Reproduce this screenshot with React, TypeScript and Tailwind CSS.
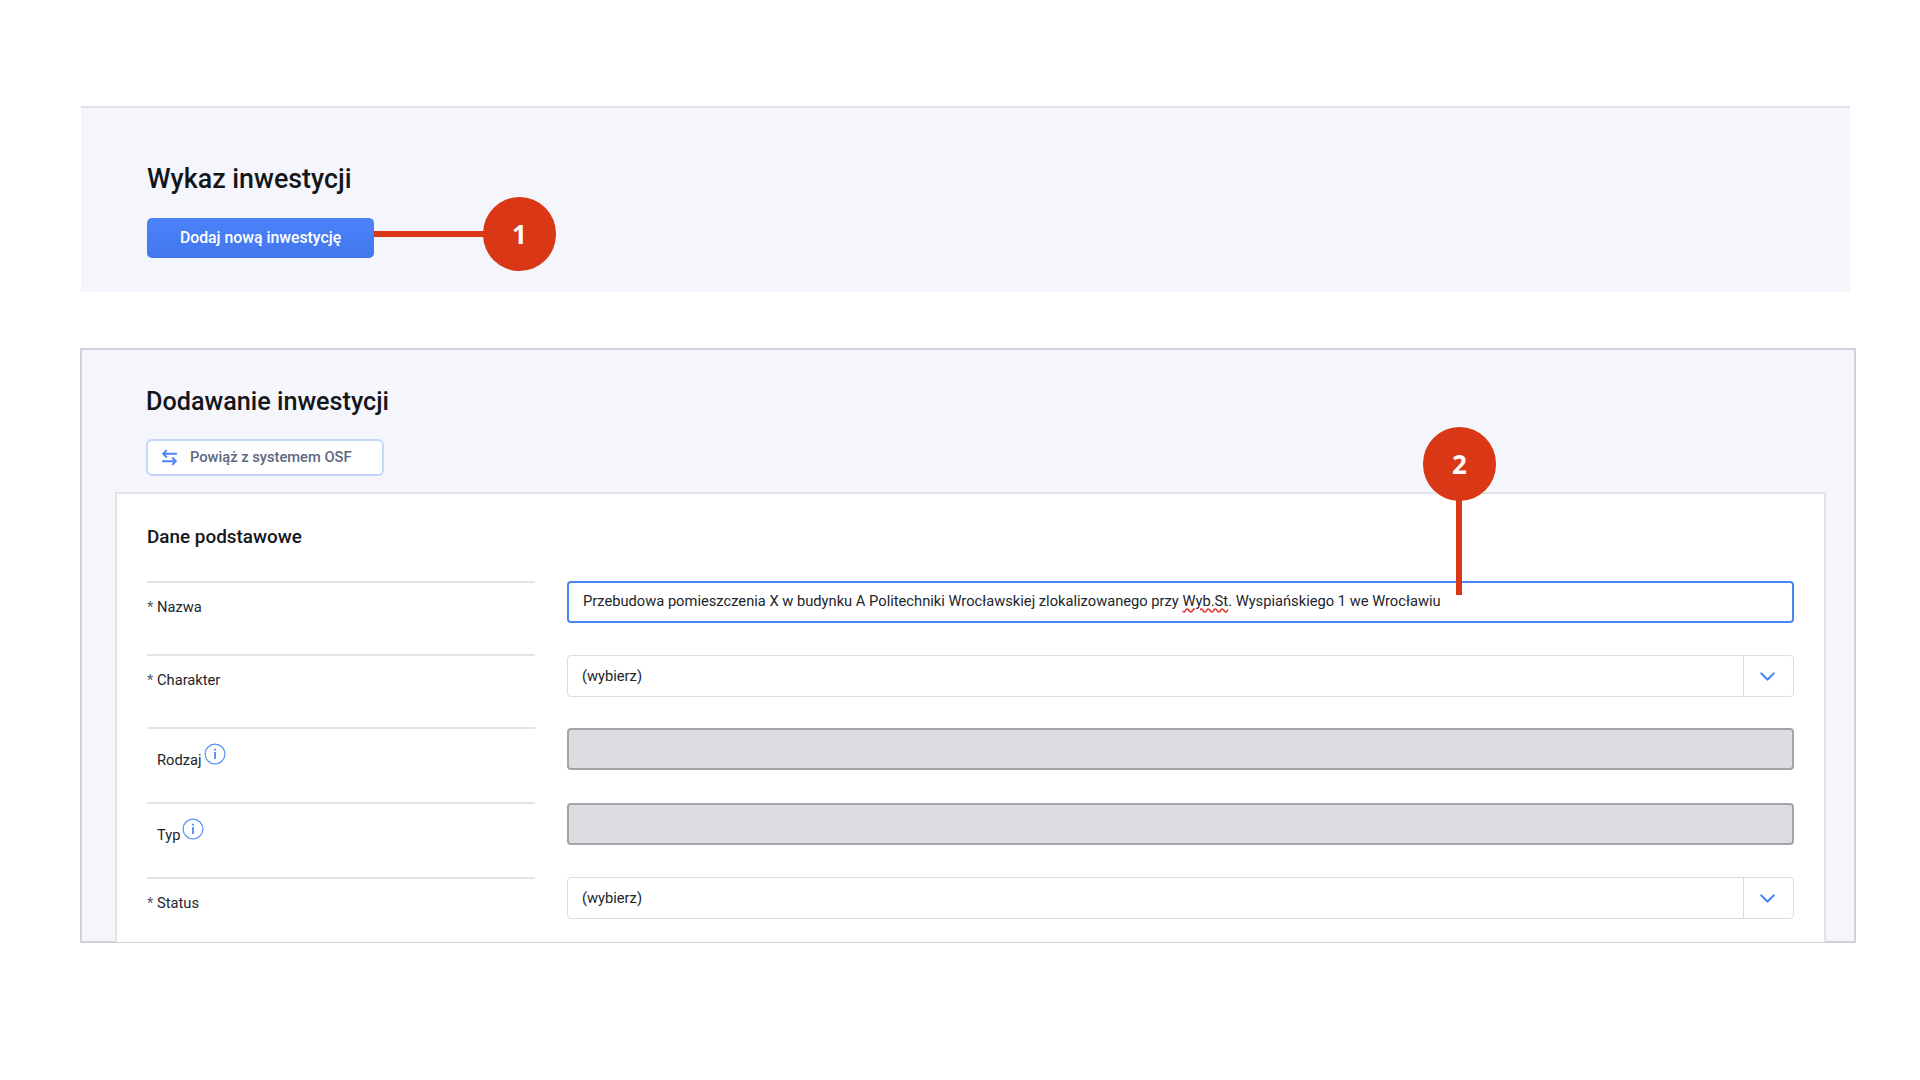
import { ChevronDown } from "lucide-react";

const font = { fontFamily: "Roboto, sans-serif" };

function Callout({ n, className }: { n: number; className: string }) {
  return (
    <div
      className={`absolute flex h-[74px] w-[73px] items-center justify-center rounded-full bg-[#da3716] text-[26px] font-bold text-white ${className}`}
      style={{ fontFamily: "'Open Sans', sans-serif" }}
    >
      {n}
    </div>
  );
}

function InfoIcon() {
  return (
    <svg viewBox="0 0 22 22" className="ml-[2px] h-[22px] w-[22px] -translate-y-[6px]" fill="none">
      <circle cx="11" cy="11" r="9.9" stroke="#5b8ff5" strokeWidth="1.2" />
      <rect x="10.2" y="9" width="1.6" height="7" fill="#3b78f0" />
      <rect x="10.2" y="5.8" width="1.6" height="1.8" fill="#3b78f0" />
    </svg>
  );
}

function Label({ text, required, info }: { text: string; required?: boolean; info?: boolean }) {
  return (
    <div className={`relative flex items-center pl-[10px] text-[14.7px] leading-[20px] text-[#22252b] ${info ? "pt-[6px]" : ""}`}>
      {required && <span className="absolute left-0 top-0 text-[#555b68]">*</span>}
      <span>{text}</span>
      {info && <InfoIcon />}
    </div>
  );
}

function Select({ className = "" }: { className?: string }) {
  return (
    <div className={`flex h-[42px] rounded-[4px] border border-[#dcdde2] bg-white text-[14.7px] text-[#22252b] ${className}`}>
      <div className="flex flex-1 items-center pl-[14px]">(wybierz)</div>
      <div className="flex w-[50px] items-center justify-center border-l border-[#dcdde2] pr-[2px]">
        <ChevronDown size={25} strokeWidth={2} className="text-[#3f7ef5]" />
      </div>
    </div>
  );
}

function Row({ label, children, h }: { label: React.ReactNode; children: React.ReactNode; h: string }) {
  return (
    <div className={`flex gap-[32px] ${h}`}>
      <div className="w-[388px] shrink-0 border-t-2 border-[#e2e3e8] pt-[14px]">{label}</div>
      <div className="flex-1">{children}</div>
    </div>
  );
}

export default function App() {
  return (
    <div className="min-h-screen bg-white pl-[80px] pt-[106px]" style={font}>
      <section className="relative ml-px h-[186px] w-[1769px] border-t-2 border-[#e1e3ea] bg-[#f4f6fb] pl-[66px] pt-[51px]">
        <h1 className="text-[26.8px] font-medium leading-[40px] text-[#14161a]">Wykaz inwestycji</h1>
        <div className="relative mt-[19px] w-[227px]">
          <button className="h-[40px] w-[227px] rounded-[5px] bg-gradient-to-b from-[#4b83fb] to-[#4276ec] text-[15.8px] font-medium text-white">
            Dodaj nową inwestycję
          </button>
          <div className="absolute left-[227px] top-[13px] h-[6px] w-[112px] bg-[#da3716]" />
          <Callout n={1} className="left-[336px] -top-[21px]" />
        </div>
      </section>

      <section className="relative mt-[56px] h-[595px] w-[1776px] border-2 border-[#d0d2d8] bg-[#f4f6fb]">
        <div className="pl-[64px] pt-[32px]">
          <h2 className="text-[25.2px] font-medium leading-[40px] text-[#14161a]">Dodawanie inwestycji</h2>
          <button className="mt-[17px] flex h-[37px] w-[238px] items-center rounded-[6px] border-2 border-[#c4d6fb] bg-white pl-[13px] text-[14.7px] font-medium text-[#5d6880]">
            <svg viewBox="0 0 16 16" className="h-[17px] w-[17px]" fill="none" stroke="#4d86f5" strokeWidth="1.8">
              <path d="M15 4.5H2M5.5 1 2 4.5 5.5 8M1 11.5h13M10.5 8l3.5 3.5-3.5 3.5" />
            </svg>
            <span className="ml-[12px] pb-[1px]">Powiąż z systemem OSF</span>
          </button>
        </div>
        <div className="ml-[33px] mt-[16px] h-[450px] w-[1711px] border-x-2 border-t-2 border-[#e2e3e8] bg-white pl-[30px] pr-[30px] pt-[29px]">
          <h3 className="text-[18.9px] font-medium leading-[28px] text-[#14161a]">Dane podstawowe</h3>
          <div className="mt-[30px]">
            <Row h="h-[73px]" label={<Label text="Nazwa" required />}>
              <div className="flex h-[42px] items-center rounded-[4px] border-2 border-[#4a84f5] bg-white pb-[1px] pl-[14px] text-[14.7px] text-[#22252b]">
                <span>
                  Przebudowa pomieszczenia X w budynku A Politechniki Wrocławskiej zlokalizowanego przy{" "}
                  <span className="underline decoration-[#e0342b] decoration-wavy">Wyb.St</span>. Wyspiańskiego 1 we Wrocławiu
                </span>
              </div>
            </Row>
            <Row h="h-[73px]" label={<Label text="Charakter" required />}>
              <Select className="mt-px" />
            </Row>
            <Row h="h-[75px]" label={<Label text="Rodzaj" info />}>
              <div className="mt-px h-[42px] rounded-[4px] border-2 border-[#a3a4a8] bg-[#dcdde1]" />
            </Row>
            <Row h="h-[75px]" label={<Label text="Typ" info />}>
              <div className="mt-px h-[42px] rounded-[4px] border-2 border-[#a3a4a8] bg-[#dcdde1]" />
            </Row>
            <Row h="h-[62px]" label={<Label text="Status" required />}>
              <Select />
            </Row>
          </div>
        </div>
        <div className="absolute left-[1374px] top-[150px] h-[95px] w-[6px] bg-[#da3716]" />
        <Callout n={2} className="left-[1341px] top-[77px]" />
      </section>
    </div>
  );
}
